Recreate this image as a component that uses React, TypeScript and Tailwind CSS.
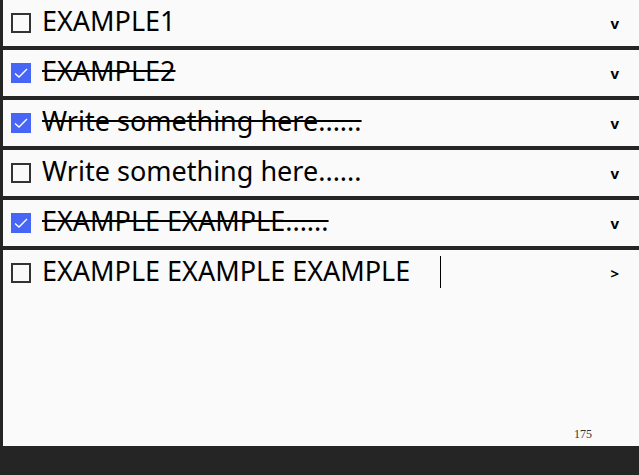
import React from 'react';

type Item = { text: string; done: boolean; open: boolean };

const items: Item[] = [
  { text: 'EXAMPLE1', done: false, open: true },
  { text: 'EXAMPLE2', done: true, open: true },
  { text: 'Write something here......', done: true, open: true },
  { text: 'Write something here......', done: false, open: true },
  { text: 'EXAMPLE EXAMPLE......', done: true, open: true },
];

const Box = ({ checked }: { checked: boolean }) =>
  checked ? (
    <div className="w-[20px] h-[20px] bg-[#4766f6] flex items-center justify-center shrink-0">
      <svg width="16" height="16" viewBox="0 0 16 16">
        <path d="M2 8.5 L6 12 L14 4" fill="none" stroke="#ffffff" strokeWidth="1.4" />
      </svg>
    </div>
  ) : (
    <div className="w-[20px] h-[20px] border-2 border-[#333333] shrink-0" />
  );

const Row = ({ item }: { item: Item }) => (
  <div className="h-[50px] border-b-4 border-[#252525] flex items-center pl-[8px] pr-[20px]">
    <Box checked={item.done} />
    <span className={`ml-[11px] pb-[5px] text-[27px] text-black leading-none ${item.done ? 'line-through' : ''}`}>
      {item.text}
    </span>
    <span className="ml-auto text-[15px] font-bold text-black">v</span>
  </div>
);

export default function App() {
  return (
    <div
      className="w-[639px] h-[475px] flex flex-col bg-[#fafafa] border-l-[3px] border-[#252525] overflow-hidden"
      style={{ fontFamily: '"Noto Sans", "Open Sans", sans-serif' }}
    >
      {items.map((it, i) => (
        <Row key={i} item={it} />
      ))}
      <div className="h-[46px] flex items-center pl-[8px] pr-[20px]">
        <Box checked={false} />
        <span className="ml-[11px] pb-[5px] text-[27px] text-black leading-none">EXAMPLE EXAMPLE EXAMPLE</span>
        <span className="ml-[30px] mb-[3px] w-px h-[32px] bg-black" />
        <span className="ml-auto text-[15px] font-bold text-black">&gt;</span>
      </div>
      <div className="flex-1 flex items-end justify-end pr-[47px] pb-[3px]">
        <span className="text-[12px] text-[#333]" style={{ fontFamily: '"Liberation Serif", serif' }}>
          175
        </span>
      </div>
      <div className="h-[29px] bg-[#252525]" />
    </div>
  );
}
